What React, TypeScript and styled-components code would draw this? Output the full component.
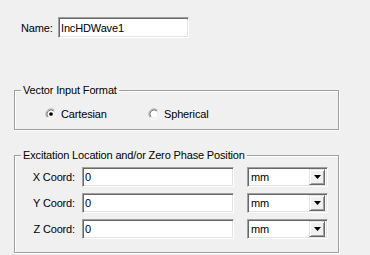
import styled, { createGlobalStyle } from 'styled-components';

const GlobalStyle = createGlobalStyle`
  html, body {
    margin: 0;
    background: #f0f0f0;
  }
  body {
    font-family: "Liberation Sans", Arial, sans-serif;
    font-size: 11px;
    letter-spacing: -0.15px;
    color: #000;
  }
`;

const Page = styled.div`
  width: 370px;
  height: 255px;
  padding-top: 17px;
  box-sizing: border-box;
  overflow: hidden;
`;

const NameRow = styled.div`
  display: flex;
  align-items: center;
  padding-left: 21px;
  height: 21px;
`;

const Label = styled.label<{ $width?: number; $right?: boolean }>`
  width: ${(p) => (p.$width ? `${p.$width}px` : 'auto')};
  text-align: ${(p) => (p.$right ? 'right' : 'left')};
  white-space: nowrap;
`;

const TextBox = styled.input<{ $width: number; $height: number }>`
  box-sizing: border-box;
  width: ${(p) => p.$width}px;
  height: ${(p) => p.$height}px;
  margin: 0;
  padding: 0 2px;
  border: 1px solid;
  border-color: #a0a0a0 #ffffff #ffffff #a0a0a0;
  box-shadow: inset 1px 1px #696969, inset -1px -1px #e3e3e3;
  background: #fff;
  font-family: inherit;
  font-size: 11px;
  letter-spacing: -0.15px;
  color: #000;
  outline: none;
`;

const Group = styled.fieldset<{ $top: number }>`
  box-sizing: border-box;
  width: 325px;
  margin: ${(p) => p.$top}px 0 0 14px;
  padding: 0;
  border: 1px solid #a0a0a0;
  box-shadow: 1px 1px 0 #ffffff, inset 1px 1px 0 #ffffff;
  min-width: 0;
`;

const Legend = styled.legend`
  margin-left: 6px;
  padding: 0 2px;
  line-height: 13px;
  font-size: 11px;
`;

const RadioRow = styled.div`
  display: flex;
  align-items: center;
  height: 13px;
  padding: 10px 0 9px 30px;
`;

const RadioItem = styled.label<{ $width?: number }>`
  display: flex;
  align-items: center;
  gap: 4px;
  width: ${(p) => (p.$width ? `${p.$width}px` : 'auto')};
`;

const CoordGrid = styled.div`
  display: grid;
  grid-template-columns: 54px 152px 81px;
  column-gap: 7px;
  row-gap: 6px;
  align-items: center;
  padding: 5px 0 13px 6px;

  & > :nth-child(3n) {
    margin-left: 6px;
  }
`;

const Combo = styled.div`
  box-sizing: border-box;
  width: 81px;
  height: 20px;
  display: flex;
  align-items: center;
  justify-content: space-between;
  border: 1px solid;
  border-color: #a0a0a0 #ffffff #ffffff #a0a0a0;
  box-shadow: inset 1px 1px #696969, inset -1px -1px #e3e3e3;
  background: #fff;
  padding: 2px 2px 2px 3px;
`;

const DropButton = styled.div`
  box-sizing: border-box;
  width: 16px;
  height: 16px;
  display: flex;
  align-items: center;
  justify-content: center;
  background: #f0f0f0;
  border: 1px solid;
  border-color: #e3e3e3 #696969 #696969 #e3e3e3;
  box-shadow: inset 1px 1px #ffffff, inset -1px -1px #a0a0a0;
`;

function Radio({ checked }: { checked?: boolean }) {
  return (
    <svg width="12" height="12" viewBox="0 0 13 13">
      <circle cx="6.5" cy="6.5" r="5" fill="#ffffff" />
      <path d="M2.61 10.39 A5.5 5.5 0 0 1 10.39 2.61" stroke="#a0a0a0" fill="none" />
      <path d="M10.39 2.61 A5.5 5.5 0 0 1 2.61 10.39" stroke="#ffffff" fill="none" />
      <path d="M3.32 9.68 A4.5 4.5 0 0 1 9.68 3.32" stroke="#696969" fill="none" />
      <path d="M9.68 3.32 A4.5 4.5 0 0 1 3.32 9.68" stroke="#e3e3e3" fill="none" />
      {checked && <circle cx="6.5" cy="6.5" r="2" fill="#000" />}
    </svg>
  );
}

function UnitCombo() {
  return (
    <Combo>
      <span>mm</span>
      <DropButton>
        <svg width="7" height="4" viewBox="0 0 7 4">
          <path d="M0 0 H7 L3.5 4 Z" fill="#000" />
        </svg>
      </DropButton>
    </Combo>
  );
}

export default function App() {
  const coords = ['X Coord:', 'Y Coord:', 'Z Coord:'];

  return (
    <Page>
      <GlobalStyle />
      <NameRow>
        <Label $width={37}>Name:</Label>
        <TextBox $width={131} $height={21} defaultValue="IncHDWave1" />
      </NameRow>

      <Group $top={46}>
        <Legend>Vector Input Format</Legend>
        <RadioRow>
          <RadioItem $width={103}>
            <Radio checked />
            Cartesian
          </RadioItem>
          <RadioItem>
            <Radio />
            Spherical
          </RadioItem>
        </RadioRow>
      </Group>

      <Group $top={19}>
        <Legend>Excitation Location and/or Zero Phase Position</Legend>
        <CoordGrid>
          {coords.map((c) => [
            <Label key={c + 'l'} $right>
              {c}
            </Label>,
            <TextBox key={c + 'i'} $width={152} $height={20} defaultValue="0" />,
            <UnitCombo key={c + 'u'} />,
          ])}
        </CoordGrid>
      </Group>
    </Page>
  );
}
